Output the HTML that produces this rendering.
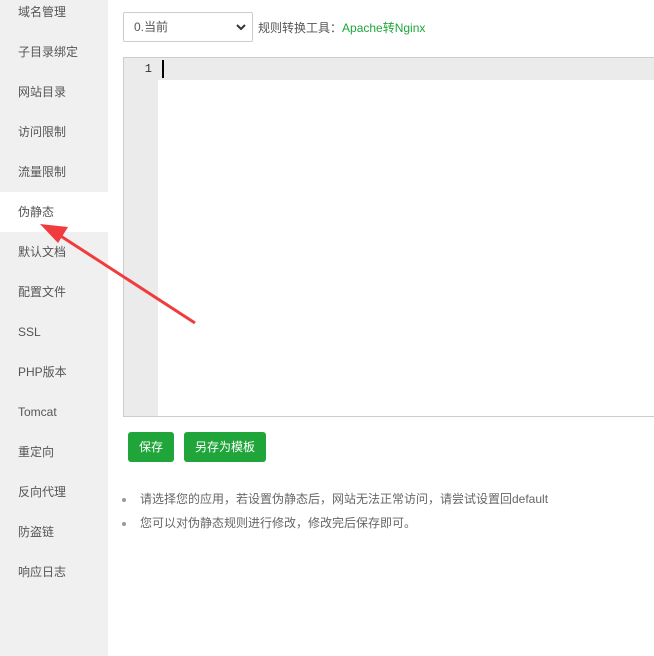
<!DOCTYPE html>
<html><head><meta charset="utf-8"><style>
*{margin:0;padding:0;box-sizing:border-box}
body{width:654px;height:656px;overflow:hidden;background:#fff;font-family:"Liberation Sans","Noto Sans CJK SC",sans-serif;font-size:12px;color:#555;position:relative}
.side{position:absolute;left:0;top:0;width:108px;height:656px;background:#f0f0f0}
.side div{position:absolute;left:0;width:108px;height:40px;line-height:24px;padding-left:18px;color:#555;font-size:12px}
.side div.on{background:#fff}
.sel{position:absolute;left:123px;top:12px;width:130px;height:30px;border:1px solid #ccc;border-radius:2px;padding-left:10px;line-height:28px;color:#555;background:#fff}
.sel svg{position:absolute;right:6px;top:10px}
.tool{position:absolute;left:258px;top:19px;color:#555}
.tool span{color:#20a53a}
.ed{position:absolute;left:123px;top:57px;width:540px;height:360px;border:1px solid #ccc;background:#fff}
.gut{position:absolute;left:0;top:0;width:34px;height:358px;background:#ebebeb}
.hl{position:absolute;left:34px;top:0;right:0;height:22px;background:#ebebeb}
.ln{position:absolute;left:0;width:28px;top:4px;text-align:right;font-family:"Liberation Mono",monospace;font-size:12px;color:#333}
.cur{position:absolute;left:38px;top:2px;width:2px;height:18px;background:#000}
.btn{position:absolute;top:432px;height:30px;background:#20a53a;color:#fff;border-radius:3px;line-height:30px;text-align:center;font-size:12px}
ul{position:absolute;left:122px;top:490px;list-style:none;color:#666;font-size:12px}
ul li{height:24px;line-height:18px;position:relative;padding-left:18px}
ul li:before{content:"";position:absolute;left:0;top:8px;width:4px;height:4px;border-radius:2px;background:#999}
</style></head><body>
<div class="side">
<div style="top:0">域名管理</div>
<div style="top:40px">子目录绑定</div>
<div style="top:80px">网站目录</div>
<div style="top:120px">访问限制</div>
<div style="top:160px">流量限制</div>
<div class="on" style="top:192px;line-height:40px">伪静态</div>
<div style="top:240px">默认文档</div>
<div style="top:280px">配置文件</div>
<div style="top:320px">SSL</div>
<div style="top:360px">PHP版本</div>
<div style="top:400px">Tomcat</div>
<div style="top:440px">重定向</div>
<div style="top:480px">反向代理</div>
<div style="top:520px">防盗链</div>
<div style="top:560px">响应日志</div>
</div>
<div class="side" style="display:none"></div>
<div class="sel">0.当前<svg width="10" height="8" viewBox="0 0 10 8"><path d="M1 2l4 4 4-4" stroke="#333" stroke-width="2" fill="none"/></svg></div>
<div class="tool">规则转换工具：<span>Apache转Nginx</span></div>
<div class="ed"><div class="gut"></div><div class="hl"></div><div class="ln">1</div><div class="cur"></div></div>
<div class="btn" style="left:128px;width:46px">保存</div>
<div class="btn" style="left:184px;width:82px">另存为模板</div>
<ul><li>请选择您的应用，若设置伪静态后，网站无法正常访问，请尝试设置回default</li><li>您可以对伪静态规则进行修改，修改完后保存即可。</li></ul>
<svg style="position:absolute;left:0;top:0" width="654" height="656"><line x1="195" y1="323" x2="56" y2="233" stroke="#f03c3c" stroke-width="3"/><polygon points="40,224 68,227 58,243" fill="#f03c3c"/></svg>
</body></html>
